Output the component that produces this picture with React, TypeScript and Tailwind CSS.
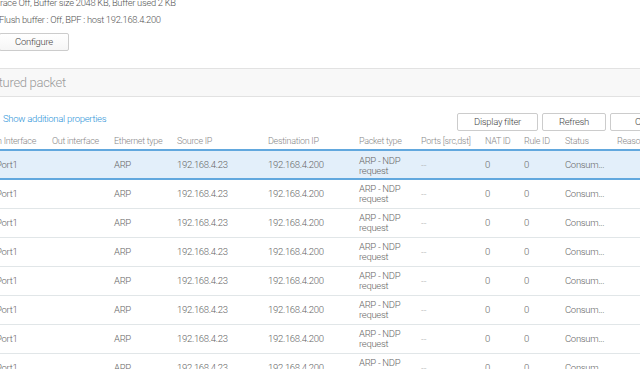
import React from 'react'

const cols = [
  'In Interface',
  'Out interface',
  'Ethernet type',
  'Source IP',
  'Destination IP',
  'Packet type',
  'Ports [src,dst]',
  'NAT ID',
  'Rule ID',
  'Status',
  'Reason',
]

const grid =
  'grid grid-cols-[57px_62px_63px_91px_91px_62px_64px_39px_41px_52px_60px] items-center'

function Row({ selected }: { selected?: boolean }) {
  return (
    <div
      className={`${grid} h-[29px] text-[#666] ${
        selected ? 'bg-[#e3effa] border-b-2 border-[#62a8de] pt-[2px]' : 'border-b border-[#e1e6e8]'
      }`}
    >
      <div className="pl-[1px]">Port1</div>
      <div></div>
      <div>ARP</div>
      <div>192.168.4.23</div>
      <div>192.168.4.200</div>
      <div className="leading-[10px]">
        ARP - NDP
        <br />
        request
      </div>
      <div className="tracking-normal text-[#aaa]">--</div>
      <div>0</div>
      <div>0</div>
      <div>Consum...</div>
      <div></div>
    </div>
  )
}

export default function App() {
  return (
    <div
      className="h-[369px] w-[640px] overflow-hidden bg-white text-[9.5px] font-light tracking-[-0.3px] text-[#555]"
      style={{ fontFamily: 'Roboto, "Liberation Sans", sans-serif' }}
    >
      <div className="-mt-[6px] -ml-[5px] text-[9.4px] leading-[17px]">
        <div>Trace Off, Buffer size 2048 KB, Buffer used 2 KB</div>
        <div className="ml-[4px]">Flush buffer : Off, BPF : host 192.168.4.200</div>
      </div>
      <div className="mt-[5px] -ml-[1px]">
        <button className="h-[18px] w-[70px] rounded-[2px] border border-[#ccc] bg-gradient-to-b from-white to-[#f6f6f6] text-[9.5px] text-[#444]">
          Configure
        </button>
      </div>

      <div className="mt-[17px] flex h-[29px] items-center border-y border-[#e2e2e2] bg-[#f8f8f8] -ml-[23px]">
        <span className="text-[13px] text-[#9a9a9a]">Captured packet</span>
      </div>

      <div className="mt-[16px] flex h-[18px] items-center">
        <a className="mb-[6px] ml-[3px] text-[#2c93d8]">Show additional properties</a>
        <div className="ml-auto -mr-[40px] flex gap-[4px]">
          <button className="h-[18px] w-[81px] rounded-[2px] border border-[#ccc] bg-white text-[#444]">
            Display filter
          </button>
          <button className="h-[18px] w-[64px] rounded-[2px] border border-[#ccc] bg-white text-[#444]">
            Refresh
          </button>
          <button className="h-[18px] w-[70px] rounded-[2px] border border-[#ccc] bg-white text-[#444]">
            Clear
          </button>
        </div>
      </div>

      <div className="-ml-[5px] mt-[1px]">
        <div className={`${grid} h-[19px] border-b-2 border-[#62a8de] pt-[2px] text-[9px] text-[#888]`}>
          {cols.map(c => (
            <div key={c} className="whitespace-nowrap">
              {c}
            </div>
          ))}
        </div>
        <Row selected />
        {Array.from({ length: 7 }).map((_, i) => (
          <Row key={i} />
        ))}
      </div>
    </div>
  )
}
